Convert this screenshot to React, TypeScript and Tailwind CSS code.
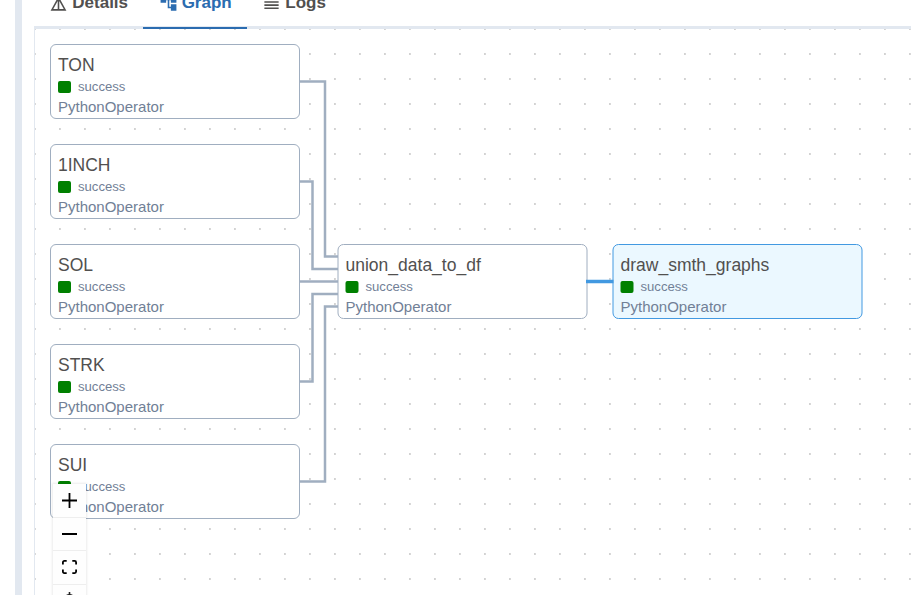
import type { ReactNode } from "react";
import { MdDetails, MdAccountTree, MdReorder } from "react-icons/md";

type TaskNode = { id: string; x: number; y: number; selected?: boolean };

const nodes: TaskNode[] = [
  { id: "TON", x: 50, y: 44 },
  { id: "1INCH", x: 50, y: 144 },
  { id: "SOL", x: 50, y: 244 },
  { id: "STRK", x: 50, y: 344 },
  { id: "SUI", x: 50, y: 444 },
  { id: "union_data_to_df", x: 337.5, y: 244 },
  { id: "draw_smth_graphs", x: 612.5, y: 244, selected: true },
];

// Edge routes share the canvas coordinates used by the nodes.
const edges = [
  "M300 81.5H325V256.5H338",
  "M300 181.5H312.5V269H338",
  "M300 281.5H338",
  "M300 381.5H312.5V294H338",
  "M300 481.5H325V306.5H338",
];

function Tab({ icon, label, active }: { icon: ReactNode; label: string; active?: boolean }) {
  return (
    <div
      className={`flex h-10 items-center gap-1 border-b-2 pr-[15.3px] pb-[10px] pl-[15.3px] text-[17px] leading-6 font-bold ${
        active ? "border-[#2b6cb0] text-[#2b6cb0]" : "border-transparent text-[#51504f]"
      }`}
    >
      {icon}
      <span className="-mt-px">{label}</span>
    </div>
  );
}

function Node({ node }: { node: TaskNode }) {
  return (
    <div
      className={`absolute top-0 left-0 h-[75px] w-[250px] rounded-[6px] border px-[7px] pt-[9px] ${
        node.selected ? "border-[#4299e1] bg-[#ebf8ff]" : "border-[#a0aec0] bg-white"
      }`}
      style={{ transform: `translate(${node.x}px, ${node.y}px)` }}
    >
      <div className="h-[23px] text-[17.5px] leading-[23px] text-[#51504f]">{node.id}</div>
      <div className="flex h-5 items-center text-[13.125px] text-[#718096]">
        <span className="mr-[7px] h-3 w-[13px] rounded-[2px] bg-[#008000]" />
        success
      </div>
      <div className="h-5 text-[15px] leading-5 text-[#718096]">PythonOperator</div>
    </div>
  );
}

function ControlButton({ children }: { children?: ReactNode }) {
  return (
    <div className="flex h-[33.5px] w-[33px] items-center justify-center border-b border-[#eeeeee] bg-[#fefefe]">
      {children}
    </div>
  );
}

export default function App() {
  return (
    <div className="flex h-[595px] w-[911px] overflow-hidden bg-white pl-[15px] font-['Liberation_Sans',Arial,sans-serif]">
      <div className="w-[7px] shrink-0 bg-[#e2e8f0]" />
      <div className="ml-3 flex min-w-0 flex-1 flex-col">
        <div className="flex h-[29px] shrink-0 items-end border-b-[3px] border-[#e2e8f0]">
          <div className="-mb-[3px] flex">
            <Tab icon={<MdDetails size={19} />} label="Details" />
            <Tab icon={<MdAccountTree size={19} />} label="Graph" active />
            <Tab icon={<MdReorder size={19} />} label="Logs" />
          </div>
        </div>
        <div className="relative flex-1 overflow-hidden border-l border-[#e2e8f0]">
          <div className="absolute -top-[29px] -left-[35px] h-[595px] w-[911px]">
            <svg className="absolute inset-0" width="911" height="595" fill="none">
              <defs>
                <pattern id="dots" x="9" y="3" width="25" height="25" patternUnits="userSpaceOnUse">
                  <circle cx="0.95" cy="0.95" r="0.95" fill="#c4c4c4" />
                </pattern>
              </defs>
              <rect width="911" height="595" fill="url(#dots)" />
            </svg>
            {nodes.map((node) => (
              <Node key={node.id} node={node} />
            ))}
            <svg className="absolute inset-0" width="911" height="595" fill="none">
              {edges.map((d) => (
                <path key={d} d={d} stroke="#a0aec0" strokeWidth="2.5" />
              ))}
              <path d="M586 281.5H613.5" stroke="#4299e1" strokeWidth="3.5" />
            </svg>
            <div className="absolute top-[484px] left-[53px] flex flex-col shadow-[0_0_2px_1px_rgba(0,0,0,0.08)]">
              <ControlButton>
                <svg width="15" height="15" viewBox="0 0 15 15" fill="#000">
                  <path d="M6.6 0h1.8v6.6H15v1.8H8.4V15H6.6V8.4H0V6.6h6.6z" />
                </svg>
              </ControlButton>
              <ControlButton>
                <svg width="15" height="2" viewBox="0 0 15 2" fill="#000">
                  <path d="M0 0h15v2H0z" />
                </svg>
              </ControlButton>
              <ControlButton>
                <svg width="15" height="14" viewBox="0 0 15 14" fill="none" stroke="#000" strokeWidth="1.8">
                  <path d="M.9 4.5V2.4Q.9.9 2.4.9h2.3M10.3.9h2.3q1.5 0 1.5 1.5v2.1M14.1 9.5v2.1q0 1.5-1.5 1.5h-2.3M4.7 13.1H2.4Q.9 13.1.9 11.6V9.5" />
                </svg>
              </ControlButton>
              <ControlButton>
                <svg width="17" height="17" viewBox="0 0 17 17" fill="none" stroke="#222" strokeWidth="1.6">
                  <circle cx="8.5" cy="8.5" r="5.7" />
                  <path d="M8.5 0v4M8.5 13v4M0 8.5h4M13 8.5h4" />
                </svg>
              </ControlButton>
            </div>
          </div>
        </div>
      </div>
    </div>
  );
}
